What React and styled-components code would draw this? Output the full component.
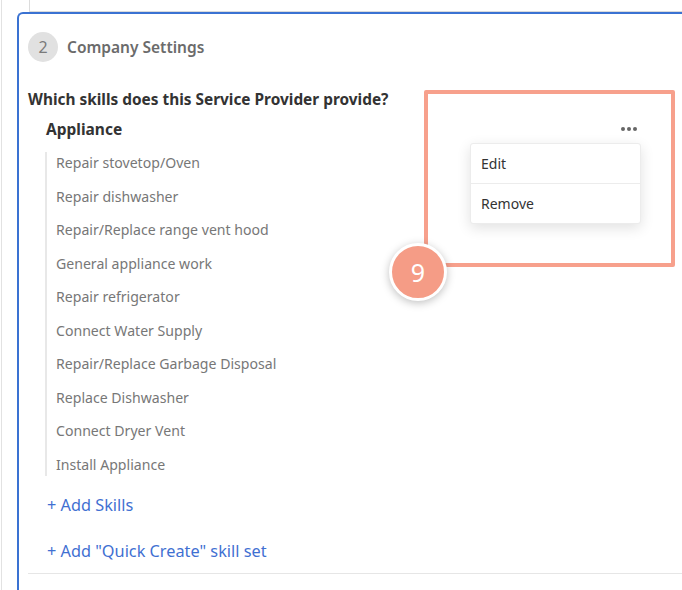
import styled, { createGlobalStyle } from 'styled-components';

const GlobalStyle = createGlobalStyle`
  html, body {
    margin: 0;
    padding: 0;
    background: #fff;
    overflow: hidden;
  }
  body {
    font-family: 'Noto Sans', 'Open Sans', sans-serif;
  }
`;

const Page = styled.div`
  position: relative;
  width: 682px;
  height: 590px;
  border-left: 1px solid #e2e2e2;
  box-sizing: border-box;
  margin-left: 1px;
`;

const PrevCard = styled.div`
  height: 11px;
  margin-left: 27px;
  border-left: 1px solid #dcdcdc;
  border-bottom: 1px solid #dadada;
`;

const Card = styled.div`
  margin-left: 15px;
  margin-right: -20px;
  border-top: 2px solid #3a72d2;
  border-left: 2px solid #3a72d2;
  border-top-left-radius: 6px;
  padding: 18px 0 0 9px;
  height: 600px;
  box-sizing: border-box;
`;

const StepHeader = styled.div`
  display: flex;
  align-items: center;
  gap: 9px;
`;

const StepNumber = styled.div`
  width: 30px;
  height: 30px;
  border-radius: 50%;
  background: #e1e1e1;
  color: #7a7a7a;
  font-size: 16px;
  display: flex;
  align-items: center;
  justify-content: center;
`;

const StepTitle = styled.div`
  font-size: 15.5px;
  font-weight: 600;
  color: #6b6b6b;
`;

const Question = styled.div`
  margin-top: 28px;
  font-size: 15.4px;
  line-height: 20px;
  font-weight: 700;
  color: #333;
`;

const SkillGroup = styled.div`
  position: relative;
  width: 595px;
  margin-left: 18px;
`;

const GroupRow = styled.div`
  display: flex;
  align-items: center;
  justify-content: space-between;
  height: 22px;
  margin-top: 8px;
`;

const GroupName = styled.div`
  font-size: 15.5px;
  font-weight: 700;
  color: #333;
`;

const MoreButton = styled.div`
  display: flex;
  gap: 2px;
  padding-right: 4px;
  span {
    width: 4px;
    height: 4px;
    border-radius: 50%;
    background: #666;
  }
`;

const Menu = styled.div`
  position: absolute;
  top: 25px;
  right: 0;
  width: 169px;
  background: #fff;
  border: 1px solid #ececec;
  border-radius: 3px;
  box-shadow: 0 4px 14px rgba(0, 0, 0, 0.12);
  z-index: 2;
`;

const MenuItem = styled.div`
  height: 39px;
  display: flex;
  align-items: center;
  padding-left: 10px;
  font-size: 14px;
  color: #333;
  & + & {
    border-top: 1px solid #ececec;
  }
`;

const SkillList = styled.div`
  margin-top: 12px;
  margin-left: -1px;
  border-left: 2px solid #e8e8e8;
  display: flex;
  flex-direction: column;
  gap: 11.5px;
`;

const SkillItem = styled.div`
  padding-left: 9px;
  font-size: 14.1px;
  line-height: 22px;
  color: #777;
`;

const AddLink = styled.div`
  margin-left: 1px;
  margin-top: ${(p) => p.$gap}px;
  font-size: 16.3px;
  line-height: 22px;
  color: #3f70d2;
`;

const Divider = styled.div`
  margin-top: 11px;
  height: 1px;
  background: #e6e6e6;
`;

const Highlight = styled.div`
  position: absolute;
  left: 422px;
  top: 90px;
  width: 251px;
  height: 177px;
  box-sizing: border-box;
  border: 4px solid #f7a08c;
  border-radius: 2px;
  pointer-events: none;
`;

const Badge = styled.div`
  position: absolute;
  left: 387px;
  top: 243px;
  width: 52px;
  height: 52px;
  border-radius: 50%;
  background: #f59c86;
  border: 3px solid #fff;
  box-shadow: 0 2px 8px rgba(0, 0, 0, 0.25);
  color: #fff;
  font-size: 25px;
  display: flex;
  align-items: center;
  justify-content: center;
`;

const skills = [
  'Repair stovetop/Oven',
  'Repair dishwasher',
  'Repair/Replace range vent hood',
  'General appliance work',
  'Repair refrigerator',
  'Connect Water Supply',
  'Repair/Replace Garbage Disposal',
  'Replace Dishwasher',
  'Connect Dryer Vent',
  'Install Appliance',
];

export default function App() {
  return (
    <Page>
      <GlobalStyle />
      <PrevCard />
      <Card>
        <StepHeader>
          <StepNumber>2</StepNumber>
          <StepTitle>Company Settings</StepTitle>
        </StepHeader>
        <Question>Which skills does this Service Provider provide?</Question>
        <SkillGroup>
          <GroupRow>
            <GroupName>Appliance</GroupName>
            <MoreButton>
              <span />
              <span />
              <span />
            </MoreButton>
          </GroupRow>
          <Menu>
            <MenuItem>Edit</MenuItem>
            <MenuItem>Remove</MenuItem>
          </Menu>
          <SkillList>
            {skills.map((s) => (
              <SkillItem key={s}>{s}</SkillItem>
            ))}
          </SkillList>
          <AddLink $gap={18}>+ Add Skills</AddLink>
          <AddLink $gap={24}>+ Add "Quick Create" skill set</AddLink>
        </SkillGroup>
        <Divider />
      </Card>
      <Highlight />
      <Badge>9</Badge>
    </Page>
  );
}
